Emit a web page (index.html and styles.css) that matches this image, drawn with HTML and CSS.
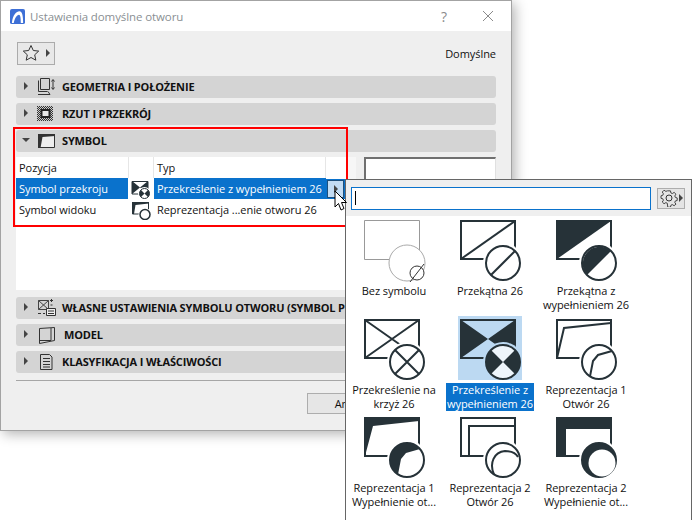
FILE: index.html
```html
<!DOCTYPE html>
<html lang="pl">
  <head>
    <meta charset="UTF-8" />
    <title>Ustawienia domyślne otworu</title>
    <link rel="stylesheet" href="styles.css">
  </head>
  <body>
    <!-- Okno ustawien -->
    <div class="okno">
      <div class="tytul">
        <svg class="logo" width="15" height="15" viewBox="0 0 16 16"><rect width="16" height="16" rx="2" fill="#3d6fd6"/><path d="M2 15C3 6 7 2.500 10 2.500S14 7 14 15h-2.500C11.500 9 11 6 9.500 6S5 9 4 15z" fill="#fff"/></svg>
        <span class="tytul-tekst">Ustawienia domyślne otworu</span>
        <span class="pomoc">?</span>
        <svg class="zamknij" width="12" height="12" viewBox="0 0 12 12"><path d="M1 1l10 10M11 1L1 11" stroke="#8a8a8a" stroke-width="1" fill="none"/></svg>
      </div>
      <div class="tresc">
        <div class="pasek-gora">
          <button class="ulubione">
            <svg width="18" height="18" viewBox="0 0 18 18"><path d="M9 1.500l2.300 5 5.400.6-4 3.700 1.100 5.400L9 13.500l-4.800 2.700 1.100-5.400-4-3.700 5.400-.6z" fill="none" stroke="#333" stroke-width="1"/></svg>
            <span class="tr-prawo"></span>
          </button>
          <span class="domyslne">Domyślne</span>
        </div>

        <div class="panel"><span class="tr-prawo"></span>
          <svg class="ikona" width="26" height="20" viewBox="0 0 26 20"><path d="M3.500 1.500h9v11h-9zM1.500 3.500v11h9M1 17.500h12l-2-3" fill="none" stroke="#333"/><path d="M16 3v9M14.500 4.500l1.500-2 1.500 2M14.500 10.500l1.500 2 1.500-2" fill="none" stroke="#333"/></svg>
          GEOMETRIA I POŁOŻENIE</div>
        <div class="panel"><span class="tr-prawo"></span>
          <svg class="ikona" width="26" height="20" viewBox="0 0 26 20"><defs><pattern id="kreski" width="2" height="2" patternUnits="userSpaceOnUse"><rect width="2" height="2" fill="#ccc"/><rect width="1" height="1" fill="#333"/><rect x="1" y="1" width="1" height="1" fill="#333"/></pattern></defs><rect x="0" y="2" width="16" height="15" fill="url(#kreski)"/><rect x="4.500" y="6" width="8" height="7" fill="#e8e8e8" stroke="#222" stroke-width="2"/></svg>
          RZUT I PRZEKRÓJ</div>
        <div class="panel"><span class="tr-dol"></span>
          <svg class="ikona" width="26" height="20" viewBox="0 0 26 20"><path d="M1.500 3.500H17.500V16.500H1.500z" fill="#eee" stroke="#333"/><path d="M1 3H18V5L5.500 6 3.500 17H1z" fill="#333"/></svg>
          SYMBOL</div>

        <div class="symbol">
          <div class="tabela">
            <div class="kolumny">
              <div class="wiersz wiersz-naglowek">
                <span class="k-pozycja">Pozycja</span>
                <span class="k-ikona"></span>
                <span class="k-typ">Typ</span>
                <span class="k-btn"></span>
              </div>
              <div class="wiersz wybrany">
                <span class="k-pozycja">Symbol przekroju</span>
                <span class="k-ikona">
                  <svg width="22" height="20" viewBox="0 0 22 20"><path d="M2 2.500H18V15H2z" fill="#fff" stroke="#263238"/><path d="M2 2L10 8.500 18 2V15L10 8.500 2 15z" fill="#263238"/><circle cx="14.500" cy="14.500" r="6.500" fill="#fff"/><circle cx="14.500" cy="14.500" r="5" fill="#fff" stroke="#263238"/><path d="M11 11L14.500 14.500 11 18A5 5 0 0 1 11 11zM18 11L14.500 14.500 18 18A5 5 0 0 0 18 11z" fill="#263238"/></svg>
                </span>
                <span class="k-typ">Przekreślenie z wypełnieniem 26</span>
                <span class="k-btn"><span class="strzalka"><span class="tr-prawo"></span></span></span>
              </div>
              <div class="wiersz">
                <span class="k-pozycja">Symbol widoku</span>
                <span class="k-ikona">
                  <svg width="22" height="20" viewBox="0 0 22 20"><path d="M2.500 2.500H18.500V14H2.500z" fill="#fff" stroke="#263238"/><path d="M2 2H19V3.500L5.500 5 4 14H2z" fill="#263238"/><circle cx="15" cy="14.500" r="6.500" fill="#fff"/><circle cx="15" cy="14.500" r="5" fill="#fff" stroke="#263238" stroke-width="1.500"/></svg>
                </span>
                <span class="k-typ">Reprezentacja ...enie otworu 26</span>
                <span class="k-btn"></span>
              </div>
            </div>
            <div class="suwak"></div>
          </div>
          <div class="podglad"></div>
        </div>

        <div class="panel"><span class="tr-prawo"></span>
          <svg class="ikona" width="26" height="20" viewBox="0 0 26 20"><path d="M1.500 2.500h10v9h-10zM1.500 2.500l10 9M11.500 2.500l-10 9" fill="none" stroke="#444"/><path d="M9.500 10.500h9v7h-9z" fill="#eee" stroke="#333"/><path d="M11 13h6M11 15.500h6M13 2.500h3M14.500 1v3M13.500 7h2M1 15.500h3M6 15.500h2" stroke="#333" fill="none"/></svg>
          <span class="panel-dlugi">WŁASNE USTAWIENIA SYMBOLU OTWORU (SYMBOL PRZEKROJU)</span></div>
        <div class="panel"><span class="tr-prawo"></span>
          <svg class="ikona ikona-model" width="26" height="20" viewBox="0 0 26 20"><path d="M2.500 3.500L17.500 2.500V15.500L2.500 18.500ZM2.500 15.500H14V3" fill="none" stroke="#333"/></svg>
          MODEL</div>
        <div class="panel"><span class="tr-prawo"></span>
          <svg class="ikona" width="26" height="20" viewBox="0 0 26 20"><path d="M3.500 2.500h9l2.500 2.500v12.500H3.500z" fill="none" stroke="#333"/><path d="M6 6.500h7M6 9.500h7M6 12.500h7M6 15h7" stroke="#333"/></svg>
          KLASYFIKACJA I WŁAŚCIWOŚCI</div>

        <div class="stopka">
          <button class="przycisk">Anuluj</button>
        </div>
      </div>
    </div>

    <!-- Zaznaczenie -->
    <div class="ramka-czerwona"></div>

    <!-- Lista symboli -->
    <div class="lista">
      <div class="szukaj">
        <div class="pole"><span class="karetka"></span></div>
        <button class="zebatka">
          <svg width="18" height="18" viewBox="0 0 18 18"><path d="M7.500 1.500h3l.5 2.300 1.600.7 2-1.300 2 2-1.300 2 .7 1.600 2 .6v2.800l-2 .5-.7 1.600 1.300 2-2 1.700-2-1.200-1.600.7-.5 2.200h-3L7 15.300l-1.600-.7-2 1.200-2-1.900 1.300-2L2 10.300l-2-.5V7l2-.6.700-1.600-1.300-2 2-2 2 1.300L7 1.500z" transform="translate(1 .5) scale(.9)" fill="none" stroke="#333"/><circle cx="9" cy="9" r="3" fill="none" stroke="#333"/></svg>
          <span class="tr-prawo"></span>
        </button>
      </div>
      <div class="siatka">
        <div class="pozycja">
          <svg width="68" height="68" viewBox="0 0 68 68"><path d="M4.500 4.500H59.500V43.500H4.500z" fill="#fff" stroke="#999"/><circle cx="47" cy="47" r="18" fill="#fff" stroke="#aaa"/><circle cx="57" cy="57" r="7" fill="#fff" stroke="#333"/><path d="M50 66L64 48" stroke="#333"/></svg>
          <span class="opis">Bez symbolu</span>
        </div>
        <div class="pozycja">
          <svg width="68" height="68" viewBox="0 0 68 68"><path d="M5 5H59V43H5z" fill="#fff" stroke="#263238" stroke-width="2"/><path d="M5 43L59 5" stroke="#263238" stroke-width="2"/><circle cx="47" cy="47" r="20" fill="#fff"/><circle cx="47" cy="47" r="17" fill="#fff" stroke="#263238" stroke-width="2"/><path d="M35 59L59 35" stroke="#263238" stroke-width="2"/></svg>
          <span class="opis">Przekątna 26</span>
        </div>
        <div class="pozycja">
          <svg width="68" height="68" viewBox="0 0 68 68"><path d="M5 5H59V43H5z" fill="#fff" stroke="#263238" stroke-width="2"/><path d="M5 43V5H59z" fill="#263238"/><circle cx="47" cy="47" r="20" fill="#fff"/><circle cx="47" cy="47" r="17" fill="#fff" stroke="#263238" stroke-width="2"/><path d="M35 59A17 17 0 0 1 59 35z" fill="#263238"/></svg>
          <span class="opis">Przekątna z<br>wypełnieniem 26</span>
        </div>
        <div class="pozycja">
          <svg width="68" height="68" viewBox="0 0 68 68"><path d="M5 5H59V43H5z" fill="#fff" stroke="#263238" stroke-width="2"/><path d="M5 5L59 43M59 5L5 43" stroke="#263238" stroke-width="2"/><circle cx="47" cy="47" r="20" fill="#fff"/><circle cx="47" cy="47" r="17" fill="#fff" stroke="#263238" stroke-width="2"/><path d="M35 35L59 59M59 35L35 59" stroke="#263238" stroke-width="2"/></svg>
          <span class="opis">Przekreślenie na<br>krzyż 26</span>
        </div>
        <div class="pozycja pozycja-wybrana">
          <svg width="64" height="64" viewBox="2 1 64 64"><path d="M5 5L32 24 5 43zM59 5L32 24 59 43z" fill="#263238"/><path d="M5 5H59V43H5z" fill="none" stroke="#263238" stroke-width="2"/><circle cx="47" cy="47" r="20" fill="#bcd9f2"/><circle cx="47" cy="47" r="17" fill="#eef5fb" stroke="#263238" stroke-width="2"/><path d="M35 35L47 47 35 59A17 17 0 0 1 35 35zM59 35L47 47 59 59A17 17 0 0 0 59 35z" fill="#263238"/></svg>
          <span class="opis">Przekreślenie z<br>wypełnieniem 26</span>
        </div>
        <div class="pozycja">
          <svg width="68" height="68" viewBox="0 0 68 68"><path d="M5 5H59V43H5z" fill="#fff" stroke="#263238" stroke-width="2"/><path d="M5 43L12 13 59 8" fill="none" stroke="#263238" stroke-width="2"/><circle cx="47" cy="47" r="20" fill="#fff"/><circle cx="47" cy="47" r="17" fill="#fff" stroke="#263238" stroke-width="2"/><path d="M38 61.400L41 46 46 40 60 36" fill="none" stroke="#263238" stroke-width="2"/></svg>
          <span class="opis">Reprezentacja 1<br>Otwór 26</span>
        </div>
        <div class="pozycja">
          <svg width="68" height="68" viewBox="0 0 68 68"><path d="M5 5H59V43H5z" fill="#fff" stroke="#263238" stroke-width="2"/><path d="M5 43V5H59V8L13 13z" fill="#263238"/><circle cx="47" cy="47" r="20" fill="#fff"/><circle cx="47" cy="47" r="17" fill="#fff" stroke="#263238" stroke-width="2"/><path d="M38 61.400A17 17 0 1 1 60 36L46 40 41 46z" fill="#263238"/></svg>
          <span class="opis">Reprezentacja 1<br>Wypełnienie ot...</span>
        </div>
        <div class="pozycja">
          <svg width="68" height="68" viewBox="0 0 68 68"><path d="M5 5H59V43H5z" fill="#fff" stroke="#263238" stroke-width="2"/><path d="M13 43V13H59" fill="none" stroke="#263238" stroke-width="2"/><circle cx="47" cy="47" r="20" fill="#fff"/><circle cx="47" cy="47" r="17" fill="#fff" stroke="#263238" stroke-width="2"/><path d="M38 61.400C33 50 38 39 49 38 55 38 60 40 62 44" fill="none" stroke="#263238" stroke-width="2"/></svg>
          <span class="opis">Reprezentacja 2<br>Otwór 26</span>
        </div>
        <div class="pozycja">
          <svg width="68" height="68" viewBox="0 0 68 68"><path d="M5 5H59V43H5z" fill="#fff" stroke="#263238" stroke-width="2"/><path d="M4 4H60V16H14V44H4z" fill="#263238"/><circle cx="47" cy="47" r="20" fill="#fff"/><circle cx="47" cy="47" r="17" fill="#263238" stroke="#263238" stroke-width="2"/><circle cx="50" cy="50" r="13.500" fill="#fff"/></svg>
          <span class="opis">Reprezentacja 2<br>Wypełnienie ot...</span>
        </div>
      </div>
    </div>

    <!-- Kursor -->
    <svg class="kursor" width="14" height="22" viewBox="0 0 14 22"><path d="M1 1V17L4.500 13.500 7 20 10 18.500 7.500 12.500H12.500z" fill="#fff" stroke="#000"/></svg>
  </body>
</html>
```

FILE: styles.css
```css
* {
  box-sizing: border-box;
  margin: 0;
  padding: 0;
  font-family: 'Open Sans', sans-serif;
}
body {
  background: white;
  width: 692px;
  height: 520px;
  overflow: hidden;
  font-size: 11px;
  letter-spacing: -0.05px;
  color: #111;
}

.okno {
  position: absolute;
  left: 0;
  top: 0;
  width: 512px;
  height: 431px;
  background: #efefef;
  border: 1px solid #a3a3a3;
  box-shadow: 3px 3px 12px rgba(0, 0, 0, 0.3);
  overflow: hidden;
}

.tytul {
  display: flex;
  align-items: center;
  height: 30px;
  background: white;
  padding-left: 9px;
}
.logo {
  margin-right: 5px;
}
.tytul-tekst {
  font-size: 11.5px;
  letter-spacing: -0.1px;
  color: #8a8f93;
  flex: 1;
}
.pomoc {
  font-size: 14px;
  color: #8a8a8a;
  margin-right: 35px;
}
.zamknij {
  margin-right: 17px;
}

.tresc {
  padding: 11px 15px 0 15px;
}
.pasek-gora {
  display: flex;
  align-items: center;
  justify-content: space-between;
  height: 22px;
  margin-bottom: 12px;
  padding-left: 1px;
}
.ulubione {
  display: flex;
  align-items: center;
  gap: 6px;
  width: 38px;
  height: 23px;
  padding-left: 4px;
  background: #e8e8e8;
  border: 1px solid #ababab;
}
.domyslne {
  font-size: 11px;
}

.tr-prawo {
  display: inline-block;
  width: 0;
  height: 0;
  border-left: 4px solid #444;
  border-top: 4px solid transparent;
  border-bottom: 4px solid transparent;
}
.tr-dol {
  display: inline-block;
  width: 0;
  height: 0;
  border-top: 4px solid #444;
  border-left: 4px solid transparent;
  border-right: 4px solid transparent;
}

.panel {
  display: flex;
  align-items: center;
  height: 22px;
  margin-bottom: 5px;
  padding-left: 8px;
  padding-bottom: 2px;
  background: #d4d4d4;
  border-radius: 3px;
  font-size: 11px;
  font-weight: 700;
  letter-spacing: -0.15px;
  white-space: nowrap;
  overflow: hidden;
}
.panel .tr-dol {
  margin: 0 -2px;
}
.ikona {
  flex: none;
  margin: 2px -1px 0 9px;
}
.ikona-model {
  margin-right: 1px;
}

.symbol {
  display: flex;
  height: 140px;
  align-items: flex-start;
  justify-content: space-between;
}
.tabela {
  display: flex;
  width: 340px;
  height: 133px;
  background: white;
}
.kolumny {
  width: 332px;
}
.suwak {
  flex: 1;
  background: #f6f6f6;
}
.wiersz {
  display: flex;
  align-items: center;
  height: 21px;
}
.k-pozycja {
  width: 112px;
  padding-left: 3px;
  flex: none;
}
.k-ikona {
  display: flex;
  align-items: center;
  justify-content: center;
  width: 26px;
  height: 100%;
  background: white;
  flex: none;
}
.k-typ {
  width: 172px;
  height: 100%;
  line-height: 21px;
  padding-left: 3px;
  flex: none;
  white-space: nowrap;
}
.wiersz-naglowek .k-ikona {
  border-left: 1px solid #e6e6e6;
  border-right: 1px solid #e6e6e6;
}
.wiersz-naglowek .k-typ {
  border-right: 1px solid #e6e6e6;
}
.k-btn {
  flex: 1;
  display: flex;
  align-items: center;
  height: 100%;
  padding-left: 1px;
  background: white;
}
.wybrany {
  background: #0a72cc;
  color: white;
}
.strzalka {
  display: flex;
  align-items: center;
  justify-content: center;
  width: 17px;
  height: 18px;
  background: #c3dcf3;
  border: 1px solid #1d4f7c;
  box-shadow: 0 0 0 1px #0a72cc;
}
.podglad {
  width: 132px;
  height: 60px;
  background: white;
  border: 1px solid #e0e0e0;
  border-top: 2px solid #707070;
  border-left: 2px solid #707070;
}

.stopka {
  border-top: 1px solid #a6a6a6;
  margin-top: 7px;
  padding: 12px 0 0 291px;
}
.przycisk {
  width: 88px;
  height: 21px;
  background: #e6e6e6;
  border: 1px solid #adadad;
  font-size: 11px;
  color: #111;
}

.ramka-czerwona {
  position: absolute;
  left: 13px;
  top: 127px;
  width: 335px;
  height: 100px;
  border: 2px solid #f00;
}

.lista {
  position: absolute;
  left: 345px;
  top: 179px;
  width: 347px;
  height: 341px;
  background: white;
  border: 1px solid #666;
  border-bottom: none;
}
.szukaj {
  display: flex;
  align-items: center;
  gap: 6px;
  height: 36px;
  padding: 0 3px 0 5px;
  background: #efefef;
}
.pole {
  display: flex;
  align-items: center;
  width: 300px;
  height: 23px;
  padding-left: 3px;
  border: 1px solid #0a72cc;
  background: white;
}
.karetka {
  width: 1px;
  height: 14px;
  background: black;
}
.zebatka {
  display: flex;
  align-items: center;
  gap: 1px;
  width: 28px;
  height: 21px;
  padding-left: 2px;
  background: #e4e4e4;
  border: 1px solid #adadad;
}
.siatka {
  display: grid;
  grid-template-columns: repeat(3, 96px);
  grid-auto-rows: 98.5px;
}
.pozycja {
  display: flex;
  flex-direction: column;
  align-items: center;
  text-align: center;
  line-height: 14px;
  color: #111;
}
.pozycja svg {
  flex: none;
}
.pozycja-wybrana svg {
  margin: 1px 0 3px;
  background: #bcd9f2;
}
.pozycja-wybrana .opis {
  padding: 0 1px;
  background: #0a72cc;
  color: white;
}

.kursor {
  position: absolute;
  left: 334px;
  top: 190px;
}
```
